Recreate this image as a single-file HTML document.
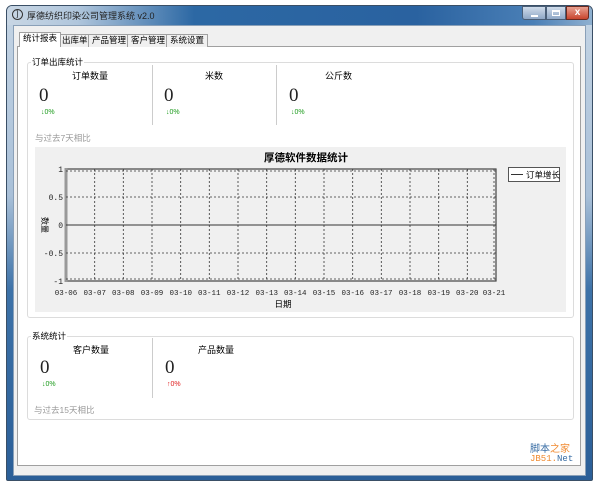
<!DOCTYPE html>
<html><head><meta charset="utf-8"><style>
*{margin:0;padding:0;box-sizing:border-box}
body{width:600px;height:486px;background:#fff;position:relative;overflow:hidden;font-family:"Liberation Sans","Noto Sans CJK SC",sans-serif;font-size:9px;color:#000}
.a{position:absolute}
.frame{left:6px;top:5px;width:587px;height:476px;border:1px solid #3a4f66;border-radius:6px 6px 2px 2px;background:linear-gradient(180deg,#c4d4e4 0,#a9c0d8 40%,#3d72a8 60%,#2b5f98 100%)}
.title{left:7px;top:6px;width:585px;height:19px;background:linear-gradient(90deg,#c8d6e4 0,#b0c6dc 12%,#2c68a4 32%,#2a62a0 70%,#4a7fb6 90%,#8fb0d0 100%);border-radius:5px 5px 0 0}
.client{left:13px;top:25px;width:573px;height:451px;background:#f0f0f0;border:1px solid #8aa0b8}
.panel{left:17px;top:46px;width:564px;height:420px;background:#fff;border:1px solid #a0a0a0}
.tab{top:34px;height:13px;border:1px solid #a0a0a0;border-bottom:none;background:#f0f0f0;font-size:8.5px;line-height:11px;padding:0 3px}
.grp{border:1px solid #dcdcdc;border-radius:3px}
.leg{background:#fff;font-size:8.5px;padding:0 1px}
.big{font-family:"Liberation Serif",serif;font-size:19px;color:#222}
.g{color:#1a9a1a;font-size:7px}
.r{color:#e02020;font-size:7px}
.gray{color:#999;font-size:8.5px}
.sep{width:1px;background:#ccc}
</style></head><body>
<div class="a frame"></div>
<div class="a title"></div>
<div class="a" style="left:12px;top:9px;width:11px;height:11px;border:1px solid #333;border-radius:50%;font-size:7px;line-height:9px;text-align:center">]</div>
<div class="a" style="left:27px;top:9px;font-size:9px;color:#222">厚德纺织印染公司管理系统 v2.0</div>
<div class="a" style="left:522px;top:6px;width:24px;height:14px;border:1px solid #4a5f78;border-radius:0 0 0 3px;background:linear-gradient(#d0dcea,#8fa8c6)"><div class="a" style="left:8px;top:8px;width:7px;height:2px;background:#fff"></div></div>
<div class="a" style="left:546px;top:6px;width:20px;height:14px;border:1px solid #4a5f78;background:linear-gradient(#d0dcea,#8fa8c6)"><div class="a" style="left:5px;top:3px;width:8px;height:6px;border:1px solid #fff;border-top-width:2px"></div></div>
<div class="a" style="left:566px;top:6px;width:23px;height:14px;border:1px solid #6a2a20;border-radius:0 0 3px 0;background:linear-gradient(#e8a090,#c8452e);color:#fff;font-size:10px;font-weight:bold;text-align:center;line-height:12px">x</div>
<div class="a client"></div>
<div class="a panel"></div>
<div class="a tab" style="left:19px;top:32px;height:15px;background:#fff;z-index:2">统计报表</div>
<div class="a tab" style="left:58px">出库单</div>
<div class="a tab" style="left:88px">产品管理</div>
<div class="a tab" style="left:127px">客户管理</div>
<div class="a tab" style="left:166px">系统设置</div>

<div class="a grp" style="left:27px;top:62px;width:547px;height:256px"></div>
<div class="a leg" style="left:31px;top:56px">订单出库统计</div>
<div class="a" style="left:72px;top:69px;font-size:9px">订单数量</div>
<div class="a" style="left:205px;top:69px;font-size:9px">米数</div>
<div class="a" style="left:325px;top:69px;font-size:9px">公斤数</div>
<div class="a big" style="left:39px;top:85px">0</div>
<div class="a big" style="left:164px;top:85px">0</div>
<div class="a big" style="left:289px;top:85px">0</div>
<div class="a g" style="left:41px;top:109px">↓0%</div>
<div class="a g" style="left:166px;top:109px">↓0%</div>
<div class="a g" style="left:291px;top:109px">↓0%</div>
<div class="a sep" style="left:152px;top:65px;height:60px"></div>
<div class="a sep" style="left:276px;top:65px;height:60px"></div>
<div class="a gray" style="left:35px;top:132px">与过去7天相比</div>

<div class="a" style="left:35px;top:147px;width:531px;height:165px;background:#f0f0f0"></div>
<svg class="a" style="left:0;top:0" width="600" height="486">
<text x="306" y="161" font-size="10.5" font-weight="bold" text-anchor="middle" font-family="Liberation Sans,Noto Sans CJK SC,sans-serif">厚德软件数据统计</text>
<rect x="66" y="169" width="430" height="112" fill="none" stroke="#444" stroke-width="1.2"/>
<line x1="66" y1="168" x2="66" y2="282" stroke="#999" stroke-width="3"/>
<g stroke="#333" stroke-width="0.8" stroke-dasharray="2,2">
<line x1="66" y1="171" x2="496" y2="171"/><line x1="66" y1="197" x2="496" y2="197"/><line x1="66" y1="253" x2="496" y2="253"/><line x1="66" y1="279" x2="496" y2="279"/>
<line x1="94.7" y1="169" x2="94.7" y2="281"/><line x1="123.3" y1="169" x2="123.3" y2="281"/><line x1="152" y1="169" x2="152" y2="281"/><line x1="180.7" y1="169" x2="180.7" y2="281"/><line x1="209.3" y1="169" x2="209.3" y2="281"/><line x1="238" y1="169" x2="238" y2="281"/><line x1="266.7" y1="169" x2="266.7" y2="281"/><line x1="295.3" y1="169" x2="295.3" y2="281"/><line x1="324" y1="169" x2="324" y2="281"/><line x1="352.7" y1="169" x2="352.7" y2="281"/><line x1="381.3" y1="169" x2="381.3" y2="281"/><line x1="410" y1="169" x2="410" y2="281"/><line x1="438.7" y1="169" x2="438.7" y2="281"/><line x1="467.3" y1="169" x2="467.3" y2="281"/><line x1="494" y1="169" x2="494" y2="281"/>
</g>
<line x1="66" y1="225" x2="496" y2="225" stroke="#333" stroke-width="1"/>
<g font-size="8" font-family="Liberation Mono,monospace" fill="#222" text-anchor="end">
<text x="63" y="172">1</text><text x="63" y="200">0.5</text><text x="63" y="228">0</text><text x="63" y="256">-0.5</text><text x="63" y="284">-1</text></g>
<g font-size="7.5" font-family="Liberation Mono,monospace" fill="#222" text-anchor="middle">
<text x="66" y="295">03-06</text><text x="94.7" y="295">03-07</text><text x="123.3" y="295">03-08</text><text x="152" y="295">03-09</text><text x="180.7" y="295">03-10</text><text x="209.3" y="295">03-11</text><text x="238" y="295">03-12</text><text x="266.7" y="295">03-13</text><text x="295.3" y="295">03-14</text><text x="324" y="295">03-15</text><text x="352.7" y="295">03-16</text><text x="381.3" y="295">03-17</text><text x="410" y="295">03-18</text><text x="438.7" y="295">03-19</text><text x="467.3" y="295">03-20</text><text x="494" y="295">03-21</text></g>
<text x="283" y="307" font-size="8.5" text-anchor="middle" font-family="Liberation Sans,Noto Sans CJK SC,sans-serif">日期</text>
<text x="42" y="225" font-size="8" text-anchor="middle" transform="rotate(90 42 225)" font-family="Liberation Sans,Noto Sans CJK SC,sans-serif">数量</text>
<rect x="508.5" y="167.5" width="51" height="14" fill="#fff" stroke="#555"/>
<line x1="511" y1="174.5" x2="523" y2="174.5" stroke="#333"/>
<text x="526" y="178" font-size="8.5" font-family="Liberation Sans,Noto Sans CJK SC,sans-serif">订单增长</text>
</svg>

<div class="a grp" style="left:27px;top:336px;width:547px;height:84px"></div>
<div class="a leg" style="left:31px;top:330px">系统统计</div>
<div class="a" style="left:73px;top:343px;font-size:9px">客户数量</div>
<div class="a" style="left:198px;top:343px;font-size:9px">产品数量</div>
<div class="a big" style="left:40px;top:357px">0</div>
<div class="a big" style="left:165px;top:357px">0</div>
<div class="a g" style="left:42px;top:381px">↓0%</div>
<div class="a r" style="left:167px;top:381px">↑0%</div>
<div class="a sep" style="left:152px;top:338px;height:60px"></div>
<div class="a gray" style="left:34px;top:404px">与过去15天相比</div>

<div class="a" style="left:530px;top:440px;font-size:10px;color:#3a6ea5">脚本<span style="color:#f08a30">之家</span></div>
<div class="a" style="left:530px;top:454px;font-size:9px;font-family:'Liberation Mono',monospace;color:#f08a30">JB51.<span style="color:#3a6ea5">Net</span></div>
</body></html>
